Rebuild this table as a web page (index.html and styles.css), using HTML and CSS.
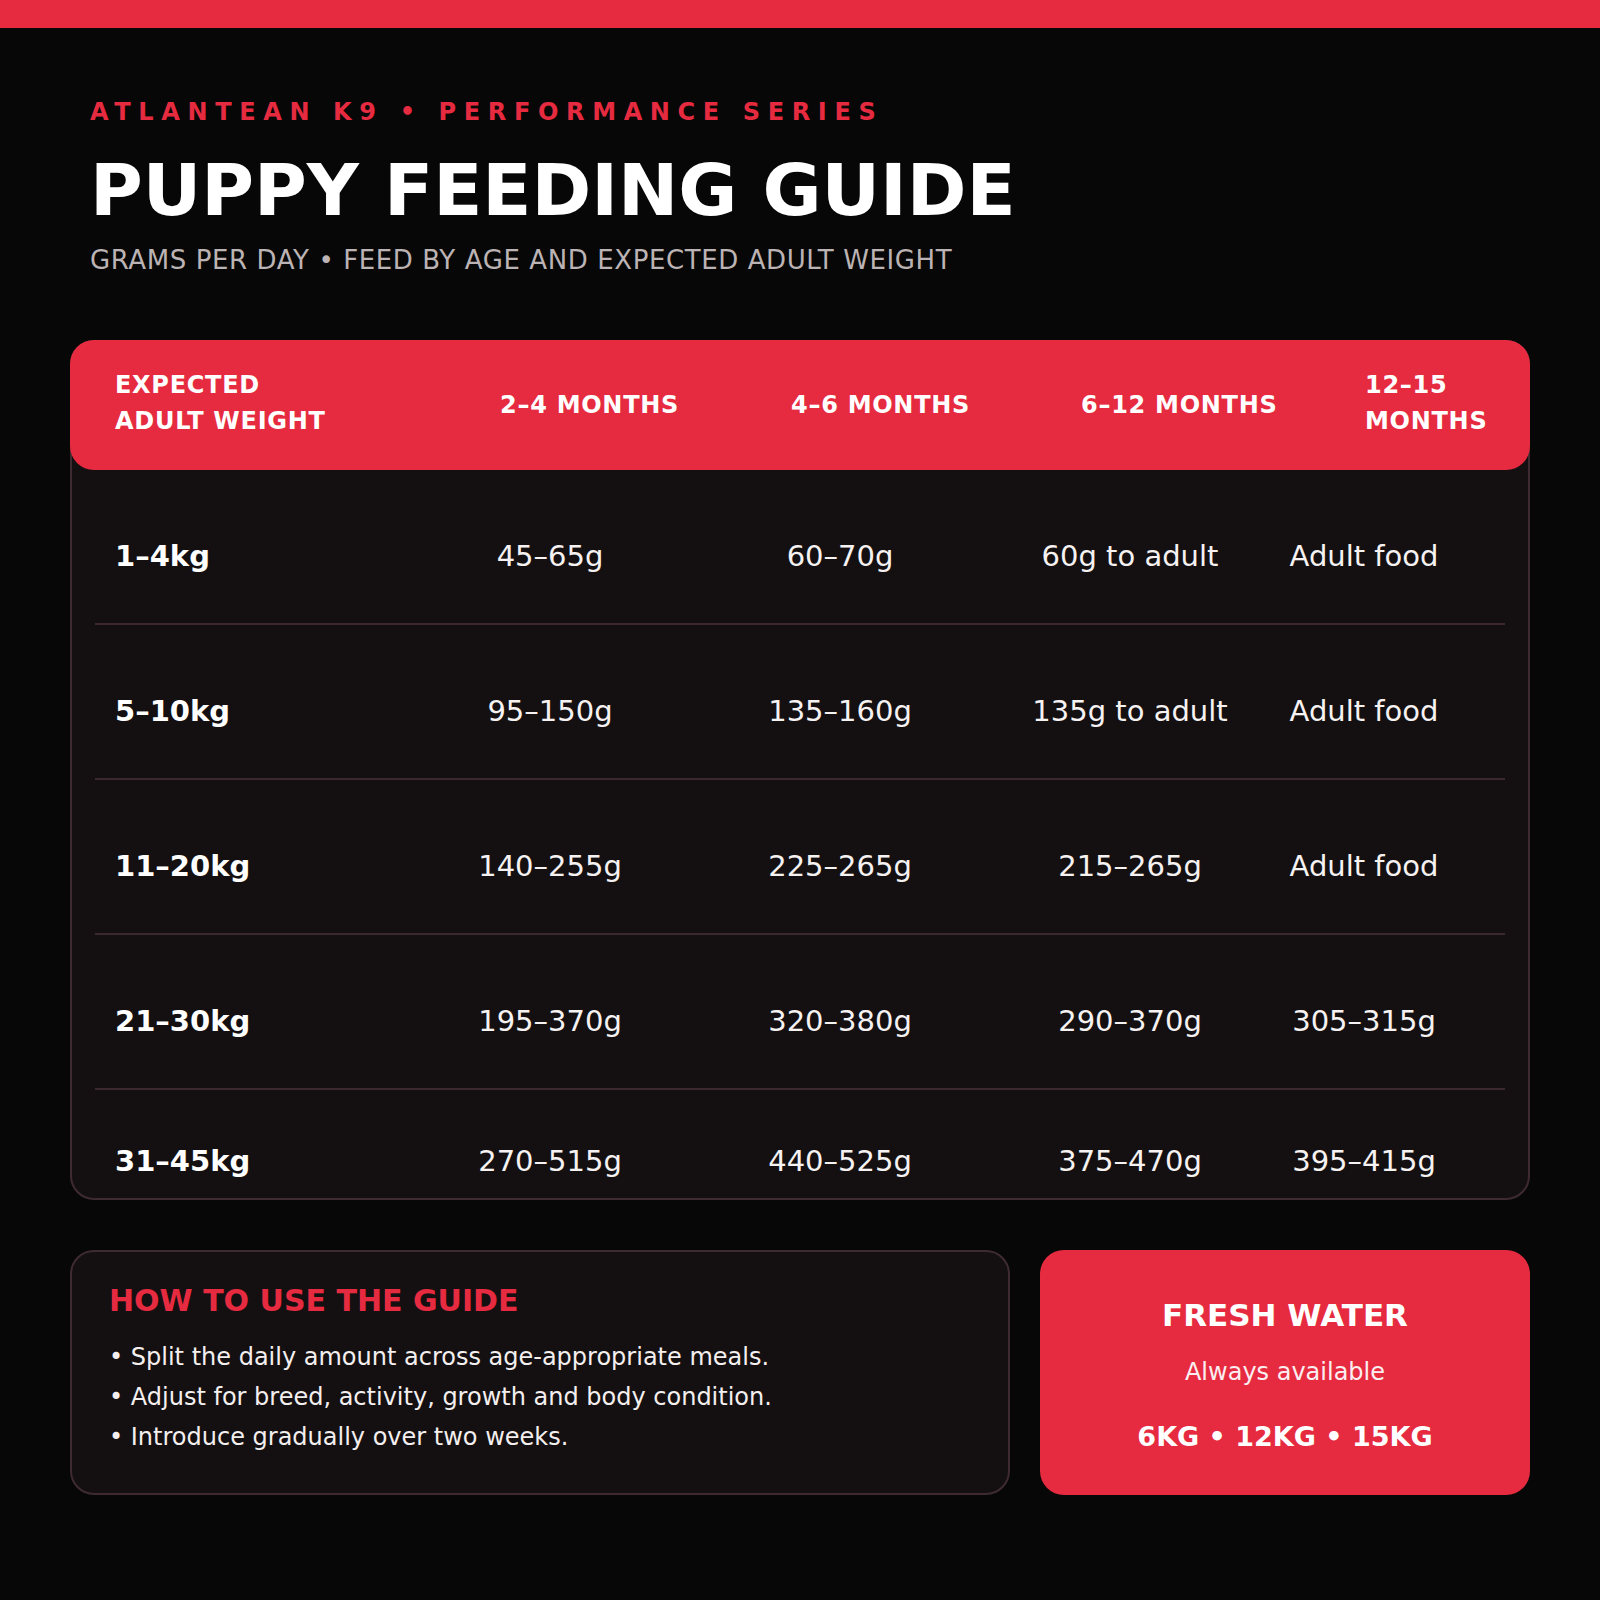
FILE: index.html
```html
<!DOCTYPE html>
<html lang="en">
<head>
<meta charset="utf-8">
<title>Puppy Feeding Guide</title>
<link rel="stylesheet" href="styles.css">
</head>
<body>
<div class="topbar"></div>
<header class="hero">
  <p class="eyebrow">ATLANTEAN K9 • PERFORMANCE SERIES</p>
  <h1 class="title">PUPPY FEEDING GUIDE</h1>
  <p class="subtitle">GRAMS PER DAY • FEED BY AGE AND EXPECTED ADULT WEIGHT</p>
</header>
<main class="content">
  <section class="table-card">
    <div class="thead">
      <div class="th two">EXPECTED<br>ADULT WEIGHT</div>
      <div class="th">2–4 MONTHS</div>
      <div class="th">4–6 MONTHS</div>
      <div class="th">6–12 MONTHS</div>
      <div class="th two">12–15<br>MONTHS</div>
    </div>
    <div class="tbody">
      <div class="row">
        <div class="cell weight">1–4kg</div>
        <div class="cell">45–65g</div>
        <div class="cell">60–70g</div>
        <div class="cell">60g to adult</div>
        <div class="cell">Adult food</div>
      </div>
      <div class="row">
        <div class="cell weight">5–10kg</div>
        <div class="cell">95–150g</div>
        <div class="cell">135–160g</div>
        <div class="cell">135g to adult</div>
        <div class="cell">Adult food</div>
      </div>
      <div class="row">
        <div class="cell weight">11–20kg</div>
        <div class="cell">140–255g</div>
        <div class="cell">225–265g</div>
        <div class="cell">215–265g</div>
        <div class="cell">Adult food</div>
      </div>
      <div class="row">
        <div class="cell weight">21–30kg</div>
        <div class="cell">195–370g</div>
        <div class="cell">320–380g</div>
        <div class="cell">290–370g</div>
        <div class="cell">305–315g</div>
      </div>
      <div class="row last">
        <div class="cell weight">31–45kg</div>
        <div class="cell">270–515g</div>
        <div class="cell">440–525g</div>
        <div class="cell">375–470g</div>
        <div class="cell">395–415g</div>
      </div>
    </div>
  </section>
  <section class="bottom">
    <div class="howto">
      <h2 class="howto-title">HOW TO USE THE GUIDE</h2>
      <ul class="howto-list">
        <li>• Split the daily amount across age-appropriate meals.</li>
        <li>• Adjust for breed, activity, growth and body condition.</li>
        <li>• Introduce gradually over two weeks.</li>
      </ul>
    </div>
    <div class="water">
      <h3 class="water-title">FRESH WATER</h3>
      <p class="water-avail">Always available</p>
      <p class="water-sizes">6KG • 12KG • 15KG</p>
    </div>
  </section>
</main>
</body>
</html>
```
FILE: styles.css
```css
* {
  box-sizing: border-box;
  margin: 0;
  padding: 0;
}

html, body {
  background: #070707;
}

body {
  width: 1600px;
  min-height: 1600px;
  font-family: "DejaVu Sans", "Liberation Sans", sans-serif;
  color: #ffffff;
}

.topbar {
  height: 28px;
  background: #e62b40;
}

.hero {
  padding: 70px 88px 0 90px;
}

.eyebrow {
  font-size: 24px;
  line-height: 28px;
  font-weight: 700;
  letter-spacing: 7.63px;
  color: #e62b40;
}

.title {
  margin-top: 28px;
  font-size: 72px;
  line-height: 72px;
  font-weight: 700;
  color: #ffffff;
}

.subtitle {
  margin-top: 19px;
  font-size: 26px;
  line-height: 30px;
  letter-spacing: 0.6px;
  color: #bcb3b4;
}

.content {
  margin-top: 65px;
  padding: 0 70px;
}

.table-card {
  border: 2px solid #3d2b31;
  border-radius: 24px;
  background: #141011;
}

.thead {
  margin: -2px -2px 0;
  height: 130px;
  background: #e62b40;
  border-radius: 24px;
  display: grid;
  grid-template-columns: 385px 291px 290px 284px 125px;
  align-items: center;
  padding-left: 45px;
}

.th {
  font-size: 24px;
  line-height: 36px;
  font-weight: 700;
  letter-spacing: 0.72px;
  color: #ffffff;
}

.th.two {
  margin-bottom: 4px;
}

.tbody {
  padding: 0 23px;
}

.row {
  display: grid;
  grid-template-columns: 290px 290px 290px 290px 178px;
  align-items: center;
  height: 155px;
  padding: 18px 0 0 20px;
  border-bottom: 2px solid #3b292f;
}

.row.last {
  height: 108px;
  padding-top: 34px;
  border-bottom: 0;
}

.cell {
  font-size: 29px;
  text-align: center;
  color: #f6f2f2;
}

.cell.weight {
  text-align: left;
  font-weight: 700;
  color: #ffffff;
}

.bottom {
  margin-top: 50px;
  display: grid;
  grid-template-columns: 940px 490px;
  gap: 30px;
  height: 245px;
}

.howto {
  border: 2px solid #3d2b31;
  border-radius: 24px;
  background: #141011;
  padding: 31px 36px 0 37px;
}

.howto-title {
  font-size: 30px;
  line-height: 35px;
  font-weight: 700;
  color: #e62b40;
}

.howto-list {
  list-style: none;
  margin-top: 19px;
}

.howto-list li {
  font-size: 24px;
  line-height: 40px;
  color: #f4efef;
}

.water {
  background: #e62b40;
  border-radius: 24px;
  display: flex;
  flex-direction: column;
  align-items: center;
  padding-top: 47px;
  text-align: center;
}

.water-title {
  font-size: 31px;
  line-height: 36px;
  font-weight: 700;
}

.water-avail {
  margin-top: 25px;
  font-size: 24px;
  line-height: 28px;
  color: #fbeef0;
}

.water-sizes {
  margin-top: 35px;
  font-size: 27px;
  line-height: 32px;
  font-weight: 700;
}
```
